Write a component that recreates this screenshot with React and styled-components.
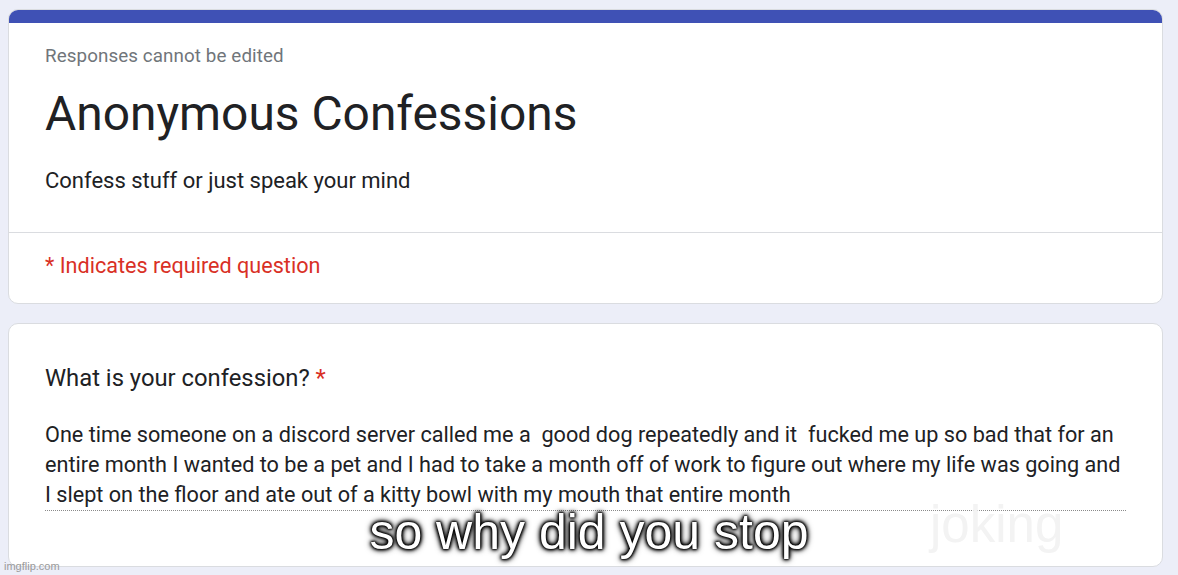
import React from "react";
import styled, { createGlobalStyle } from "styled-components";

const Global = createGlobalStyle`
  html, body { margin: 0; padding: 0; background: #eceef8; }
  body { font-family: Roboto, "Noto Sans", Arial, sans-serif; color: #202124; }
  #root { min-height: 575px; }
`;

const Page = styled.div`
  position: relative;
  height: 575px;
  padding: 9px 15px 0 8px;
  box-sizing: border-box;
  display: flex;
  flex-direction: column;
  gap: 19px;
  overflow: hidden;
`;

const Card = styled.section`
  background: #fff;
  border: 1px solid #dadce0;
  border-radius: 10px;
  overflow: hidden;
  display: flex;
  flex-direction: column;
`;

const TopBar = styled.div`
  height: 14px;
  background: #3f51b5;
  margin: -1px -1px 0;
`;

const Section = styled.div`
  padding: ${(p) => p.$pad};
  display: flex;
  flex-direction: column;
  border-top: ${(p) => (p.$divided ? "1px solid #dadce0" : "none")};
`;

const Note = styled.div`
  font-size: 18.8px;
  line-height: 24px;
  color: #70757a;
  letter-spacing: 0.1px;
`;

const Title = styled.h1`
  margin: 18px 0 0;
  font-size: 47.9px;
  line-height: 56px;
  font-weight: 400;
  color: #202124;
`;

const Description = styled.p`
  margin: 25px 0 0;
  font-size: 22px;
  line-height: 28px;
  color: #202124;
`;

const Required = styled.div`
  font-size: 21.6px;
  line-height: 26px;
  color: #d93025;
`;

const Question = styled.div`
  font-size: 23.8px;
  line-height: 30px;
  color: #202124;
`;

const Star = styled.span`
  color: #d93025;
`;

const Answer = styled.div`
  margin-top: 27px;
  font-size: 21.65px;
  line-height: 30px;
  color: #202124;
  border-bottom: 1px dotted #8a8a8a;
  white-space: pre-wrap;
`;

const Caption = styled.div`
  position: absolute;
  left: 0;
  right: 0;
  top: 502px;
  text-align: center;
  font-family: "Liberation Sans", Arial, sans-serif;
  font-size: 50px;
  line-height: 60px;
  color: #fff;
  text-shadow: 0 0 1px #000, 0 0 2px #000, 0 0 3px #000, 0 0 4px #000, 0 0 5px #000, 0 0 7px #000;
`;

const Watermark = styled.div`
  position: absolute;
  left: 930px;
  top: 495px;
  font-family: "Liberation Sans", Arial, sans-serif;
  font-size: 51px;
  line-height: 60px;
  color: #f3f3f3;
`;

const Credit = styled.div`
  position: absolute;
  left: 4px;
  bottom: 3px;
  font-family: "Liberation Sans", Arial, sans-serif;
  font-size: 11px;
  line-height: 12px;
  color: #9a9a9a;
`;

export default function App() {
  return (
    <>
      <Global />
      <Page>
        <Card>
          <TopBar />
          <Section $pad="21px 36px 37px">
            <Note>Responses cannot be edited</Note>
            <Title>Anonymous Confessions</Title>
            <Description>Confess stuff or just speak your mind</Description>
          </Section>
          <Section $divided $pad="20px 36px 24px">
            <Required>* Indicates required question</Required>
          </Section>
        </Card>
        <Card>
          <Section $pad="39px 36px 55px">
            <Question>
              What is your confession? <Star>*</Star>
            </Question>
            <Answer>
              {"One time someone on a discord server called me a  good dog repeatedly and it  fucked me up so bad that for an entire month I wanted to be a pet and I had to take a month off of work to figure out where my life was going and I slept on the floor and ate out of a kitty bowl with my mouth that entire month"}
            </Answer>
          </Section>
        </Card>
        <Watermark>joking</Watermark>
        <Caption>so why did you stop</Caption>
        <Credit>imgflip.com</Credit>
      </Page>
    </>
  );
}
